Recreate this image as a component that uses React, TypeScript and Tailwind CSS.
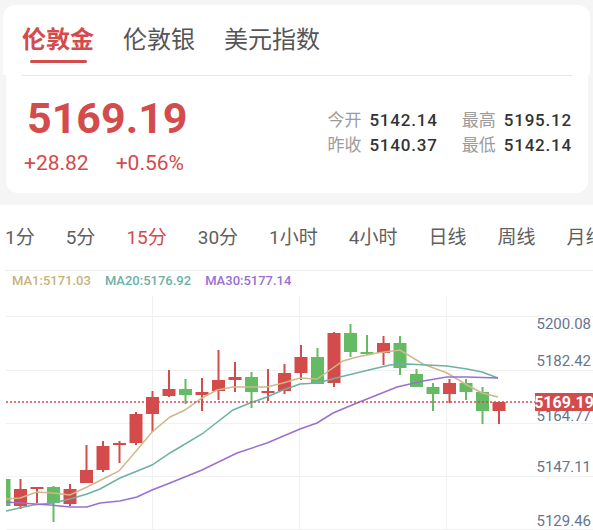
import React from 'react';

const FONT = { fontFamily: 'Roboto, "Noto Sans CJK SC", sans-serif' };

const RED = '#d44b4b';
const GREEN = '#64bb64';

// [bodyTop, bodyBottom, wickTop, wickBottom, up]
const candles: [number, number, number, number, boolean][] = [
  [479, 506, 479, 506, false],
  [489, 506, 479, 509, true],
  [487, 489, 487, 503, true],
  [487, 503, 486, 522, false],
  [489, 504, 484, 506, true],
  [470, 483, 445, 483, true],
  [446, 470, 441, 472, true],
  [443, 445, 441, 463, true],
  [414, 443, 412, 445, true],
  [397, 414, 391, 432, true],
  [389, 396, 370, 397, true],
  [389, 395, 379, 404, false],
  [392, 395, 378, 411, true],
  [380, 391, 350, 400, true],
  [377, 380, 362, 392, true],
  [377, 392, 372, 408, false],
  [391, 393, 369, 401, true],
  [373, 391, 364, 394, true],
  [357, 373, 345, 380, true],
  [357, 384, 348, 384, false],
  [333, 383, 332, 387, true],
  [333, 352, 324, 357, false],
  [352, 354, 335, 355, false],
  [343, 353, 336, 365, true],
  [343, 368, 336, 375, false],
  [374, 387, 369, 387, false],
  [387, 394, 383, 411, false],
  [383, 394, 379, 403, true],
  [383, 392, 379, 400, false],
  [392, 411, 387, 424, false],
  [402, 411, 402, 424, true],
];

const ma1 =
  '6,499 20,498 37,492 53,493 70,495 87,487 103,479 119,471 137,450 152,432 170,417 185,410 202,398 217,390 233,387 267,387 283,383 300,378 317,379 330,370 343,361 357,357 377,353 400,350 423,364 447,373 467,385 482,393 498,397';
const ma20 =
  '6,511 33,505 53,503 70,499 87,494 100,489 120,478 152,465 170,453 202,434 233,410 250,403 267,397 283,390 300,384 317,383 340,377 373,369 390,365 407,364 447,366 467,369 482,372 498,378';
const ma30 =
  '6,502 50,505 70,507 87,507 100,503 120,501 137,497 152,490 170,483 202,470 237,453 267,443 300,429 317,423 333,413 357,403 377,395 397,387 423,381 447,377 467,377 498,378';

const yLabels: [string, number][] = [
  ['5200.08', 329],
  ['5182.42', 366],
  ['5164.77', 421],
  ['5147.11', 472],
  ['5129.46', 526],
];

const periods = ['1分', '5分', '15分', '30分', '1小时', '4小时', '日线', '周线', '月线'];

const stats: [string, string][] = [
  ['今开', '5142.14'],
  ['最高', '5195.12'],
  ['昨收', '5140.37'],
  ['最低', '5142.14'],
];

const KChart: React.FC = () => (
  <svg width="593" height="239" viewBox="0 291 593 239" className="block">
    <defs>
      <clipPath id="plot">
        <rect x="6" y="291" width="587" height="239" />
      </clipPath>
    </defs>
    {[316, 370, 423, 476, 529].map(y => (
      <line key={y} x1="6" x2="593" y1={y + 0.5} y2={y + 0.5} stroke="#f1f1f1" />
    ))}
    {[152, 299, 446].map(x => (
      <line key={x} x1={x + 0.5} x2={x + 0.5} y1="296" y2="530" stroke="#f1f1f1" />
    ))}

    <g clipPath="url(#plot)">
      {candles.map(([bt, bb, wt, wb, up], i) => {
        const cx = 4 + 16.5 * i;
        const c = up ? RED : GREEN;
        return (
          <g key={i}>
            <rect x={cx - 1} y={wt} width="2" height={wb - wt} fill={c} />
            <rect x={cx - 6.5} y={bt} width="13" height={Math.max(bb - bt, 2)} fill={c} />
          </g>
        );
      })}
    </g>

    <polyline points={ma1} fill="none" stroke="#cdb98a" strokeWidth="1.5" />
    <polyline points={ma20} fill="none" stroke="#6db1a5" strokeWidth="1.5" />
    <polyline points={ma30} fill="none" stroke="#9a6fd4" strokeWidth="1.5" />

    {yLabels.map(([t, y]) => (
      <text key={t} x="591" y={y} textAnchor="end" fontSize="15" fill="#66758e" style={FONT}>
        {t}
      </text>
    ))}

    {/* current price marker */}
    <line x1="6" x2="535" y1="402" y2="402" stroke={RED} strokeWidth="1.5" strokeDasharray="2 2" />
    <rect x="535" y="393" width="58" height="18" fill={RED} />
    <text x="564" y="407.5" textAnchor="middle" fontSize="16" fontWeight="700" fill="#ffffff" style={FONT}>
      5169.19
    </text>
  </svg>
);

const App: React.FC = () => {
  return (
    <div className="w-[593px] h-[530px] overflow-hidden bg-[#f5f5f5] pt-[5px]" style={FONT}>
      {/* Market tabs */}
      <div className="mx-[3px] h-[70px] bg-white rounded-t-[12px] pl-[19px] pt-[23px] flex gap-[29px]">
        <div className="flex flex-col items-center">
          <span className="text-[24px] leading-[24px] font-bold text-[#d44b4b]">伦敦金</span>
          <span className="mt-[8px] w-[57px] h-[3px] rounded-full bg-[#d44b4b]" />
        </div>
        <span className="text-[24px] leading-[24px] text-[#555555]">伦敦银</span>
        <span className="text-[24px] leading-[24px] text-[#555555]">美元指数</span>
      </div>

      {/* Quote card */}
      <div className="ml-[6px] mr-[5px] h-[118px] bg-white rounded-b-[12px]">
        <div className="mx-[16px] h-px bg-[#e8e8e8]" />
        <div className="flex items-start justify-between pl-[21px] pr-[16px]">
          <div className="pt-[21px]">
            <div className="text-[43px] leading-[43px] font-bold text-[#d44b4b]">5169.19</div>
            <div className="mt-[13px] flex gap-[27px] text-[21px] leading-[21px] text-[#d44b4b]">
              <span className="-ml-[3px]">+28.82</span>
              <span>+0.56%</span>
            </div>
          </div>
          <div className="pt-[32px] grid grid-cols-[auto_auto] gap-x-[24px] text-[17px] leading-[25px]">
            {stats.map(([k, v]) => (
              <div key={k} className="flex gap-[8px]">
                <span className="text-[#9c9c9c]">{k}</span>
                <span className="text-[#333333] font-medium tracking-[0.8px]">{v}</span>
              </div>
            ))}
          </div>
        </div>
      </div>

      {/* Chart section */}
      <div className="mt-[12px] bg-white">
        <div className="h-[65px] flex items-center gap-[31px] pl-[5px] whitespace-nowrap overflow-hidden text-[19px] leading-[19px]">
          {periods.map(p => (
            <span key={p} className={p === '15分' ? 'shrink-0 text-[#d44b4b]' : 'shrink-0 text-[#5f5f5f]'}>
              {p}
            </span>
          ))}
        </div>
        <div className="ml-[5px] h-px bg-[#eeeeee]" />
        <div className="h-[20px] flex items-center gap-[14px] pl-[12px] text-[13px] leading-[14px] font-medium">
          <span className="text-[#c7b27e]">MA1:5171.03</span>
          <span className="text-[#6db1a5]">MA20:5176.92</span>
          <span className="text-[#9a6fd4]">MA30:5177.14</span>
        </div>
        <KChart />
      </div>
    </div>
  );
};

export default App;
